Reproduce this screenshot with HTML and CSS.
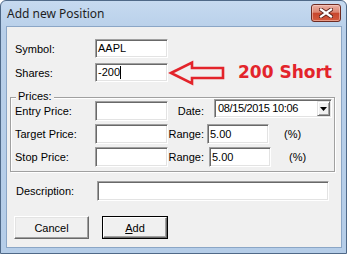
FILE: index.html
```html
<!DOCTYPE html>
<html>
<head>
<meta charset="utf-8">
<title>Add new Position</title>
<link rel="stylesheet" href="styles.css">
</head>
<body>
<div class="window">
  <div class="titlebar">
    <span class="title">Add new Position</span>
    <div class="close">
      <svg width="14" height="10" viewBox="0 0 14 10">
        <path d="M2 1.5 L12 8.5 M12 1.5 L2 8.5" stroke="#5a2019" stroke-width="4" stroke-linecap="square"/>
        <path d="M2 1.5 L12 8.5 M12 1.5 L2 8.5" stroke="#ffffff" stroke-width="2.2" stroke-linecap="square"/>
      </svg>
    </div>
  </div>
  <div class="client">
    <div class="row">
      <span class="lbl">Symbol:</span>
      <div class="edit edit-short">AAPL</div>
    </div>
    <div class="row row-shares">
      <span class="lbl">Shares:</span>
      <div class="edit edit-short">-200<span class="caret"></span></div>
      <svg class="arrow" width="56" height="24" viewBox="0 0 56 24">
        <path d="M2 12 L23 1.5 L23 7 L54 7 L54 17 L23 17 L23 22.5 Z" fill="none" stroke="#e3242b" stroke-width="2.6" stroke-linejoin="miter"/>
      </svg>
      <span class="note">200 Short</span>
    </div>
    <div class="group">
      <span class="group-title">Prices:</span>
      <div class="grow">
        <span class="lbl">Entry Price:</span>
        <div class="edit edit-short edit-tall"></div>
        <span class="rlbl">Date:</span>
        <div class="combo">
          <span class="combo-text">08/15/2015 10:06</span>
          <span class="drop">
            <svg width="7" height="4" viewBox="0 0 7 4"><path d="M0 0 H7 L3.5 4 Z" fill="#000"/></svg>
          </span>
        </div>
      </div>
      <div class="grow">
        <span class="lbl">Target Price:</span>
        <div class="edit edit-short edit-tall"></div>
        <span class="rlbl">Range:</span>
        <div class="edit edit-range edit-tall">5.00</div>
        <span class="pct">(%)</span>
      </div>
      <div class="grow">
        <span class="lbl">Stop Price:</span>
        <div class="edit edit-short edit-tall"></div>
        <span class="rlbl">Range:</span>
        <div class="edit edit-range edit-range2 edit-tall">5.00</div>
        <span class="pct pct2">(%)</span>
      </div>
    </div>
    <div class="row row-desc">
      <span class="lbl lbl-desc">Description:</span>
      <div class="edit edit-desc edit-tall"></div>
    </div>
    <div class="buttons">
      <div class="btn btn-cancel">Cancel</div>
      <div class="btn btn-add"><span class="btn-inner"><u>A</u>dd</span></div>
    </div>
  </div>
</div>
</body>
</html>
```

FILE: styles.css
```css
* { box-sizing: border-box; }

body {
  margin: 0;
  background: #ffffff;
  font-family: "Liberation Sans", Arial, sans-serif;
  font-size: 11px;
  color: #000;
}

.window {
  width: 347px;
  height: 254px;
  border: 1px solid #4f6988;
  border-radius: 6px 6px 0 0;
  background: linear-gradient(#c6daf0, #b8cfe9 30px, #b5cde8);
  padding: 0 4px 5px 5px;
  display: flex;
  flex-direction: column;
}

.titlebar {
  height: 25px;
  display: flex;
  align-items: flex-start;
}

.title {
  margin: 6px 0 0 1px;
  font-family: "Noto Sans", "Open Sans", sans-serif;
  font-size: 12px;
  line-height: 14px;
  color: #1e1e1e;
}

.close {
  margin: 3px 1px 0 auto;
  width: 30px;
  height: 18px;
  border: 1px solid #6e2b22;
  border-radius: 3px;
  background: linear-gradient(#eab0a4, #dc8672 45%, #c8462d 52%, #d45b3e);
  box-shadow: inset 0 0 0 1px rgba(255, 220, 210, 0.5);
  display: flex;
  align-items: center;
  justify-content: center;
}

.client {
  flex: 1;
  background: #f0f0f0;
  border: 1px solid #8ba6c6;
  padding: 12px 0 0 8px;
}

.row {
  display: flex;
  align-items: center;
  height: 19px;
}

.row-shares { margin-top: 5px; }

.lbl {
  width: 80px;
  flex: none;
}

.edit {
  flex: none;
  height: 19px;
  background: #fff;
  border: 1px solid;
  border-color: #a0a0a0 #ffffff #ffffff #a0a0a0;
  box-shadow: inset 1px 1px #696969, inset -1px -1px #e3e3e3;
  padding: 0 2px 0 2px;
  line-height: 17px;
  display: flex;
  align-items: center;
}

.edit-short { width: 73px; }
.edit-tall { height: 20px; }

.caret {
  display: inline-block;
  width: 1px;
  height: 13px;
  background: #000;
  margin-left: 0;
}

.arrow {
  flex: none;
  margin-left: 1px;
  overflow: visible;
}

.note {
  margin-left: 13px;
  font-family: "DejaVu Sans", Verdana, sans-serif;
  font-weight: bold;
  font-size: 17px;
  color: #e3242b;
  line-height: 19px;
}

.group {
  position: relative;
  margin: 15px 0 0 -5px;
  width: 325px;
  border: 1px solid #a0a0a0;
  box-shadow: inset 1px 1px #ffffff, 1px 1px #ffffff;
  padding: 3px 0 4px 4px;
}

.group-title {
  position: absolute;
  top: -8px;
  left: 5px;
  padding: 0 2px;
  background: #f0f0f0;
  line-height: 13px;
}

.grow {
  display: flex;
  align-items: center;
  height: 20px;
}

.grow + .grow { margin-top: 3px; }

.rlbl {
  width: 36px;
  flex: none;
  text-align: right;
}

.combo {
  align-self: flex-start;
  margin: -2px 0 0 10px;
  width: 118px;
  height: 19px;
  background: #fff;
  border: 1px solid;
  border-color: #a0a0a0 #ffffff #ffffff #a0a0a0;
  box-shadow: inset 1px 1px #696969, inset -1px -1px #e3e3e3;
  display: flex;
  align-items: center;
  padding-left: 3px;
}

.combo-text {
  line-height: 15px;
  letter-spacing: -0.35px;
}

.drop {
  margin: 0 1px 0 auto;
  width: 13px;
  height: 15px;
  background: #f0f0f0;
  border: 1px solid;
  border-color: #e3e3e3 #696969 #696969 #e3e3e3;
  box-shadow: inset 1px 1px #ffffff, inset -1px -1px #a0a0a0;
  display: flex;
  align-items: center;
  justify-content: center;
}

.edit-range {
  width: 62px;
  margin-left: 3px;
}

.edit-range2 { margin-left: 5px; }

.pct { margin-left: 15px; }
.pct2 { margin-left: 18px; }

.row-desc {
  margin-top: 9px;
  height: 20px;
}

.lbl-desc {
  width: 82px;
  padding-left: 1px;
}

.edit-desc { width: 232px; }

.buttons {
  display: flex;
  margin: 15px 0 0 -1px;
}

.btn {
  height: 23px;
  background: #f0f0f0;
  display: flex;
  align-items: center;
  justify-content: center;
}

.btn-cancel {
  width: 75px;
  border: 1px solid;
  border-color: #ffffff #696969 #696969 #ffffff;
  box-shadow: inset -1px -1px #a0a0a0, inset 1px 1px #e3e3e3;
}

.btn-add {
  width: 66px;
  margin-left: 13px;
  border: 1px solid #000;
}

.btn-inner {
  width: 100%;
  height: 100%;
  border: 1px solid;
  border-color: #ffffff #696969 #696969 #ffffff;
  box-shadow: inset -1px -1px #a0a0a0;
  display: flex;
  align-items: center;
  justify-content: center;
}

u { text-decoration-thickness: 1px; text-underline-offset: 1px; }
```
